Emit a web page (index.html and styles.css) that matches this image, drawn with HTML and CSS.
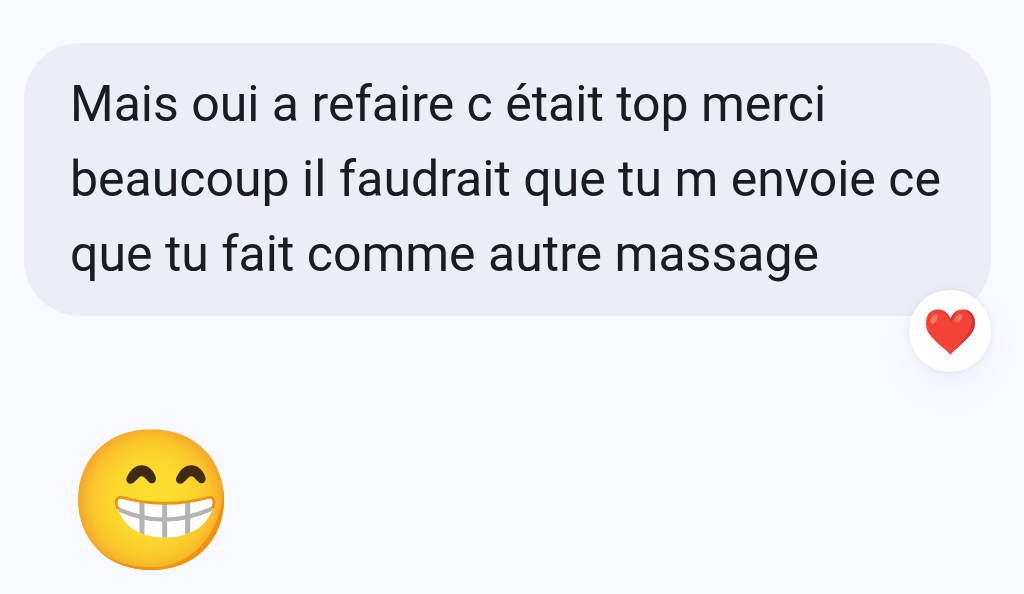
FILE: index.html
```html
<!DOCTYPE html>
<html lang="fr">
<head>
  <meta charset="UTF-8">
  <meta name="viewport" content="width=device-width, initial-scale=1.0">
  <title>Conversation</title>
  <link rel="stylesheet" href="styles.css">
</head>
<body>
  <main class="conversation">
    <div class="bubble">
      <p class="bubble-text">Mais oui a refaire c était top merci beaucoup il faudrait que tu m envoie ce que tu fait comme autre massage</p>
      <div class="reaction">
        <svg class="heart" viewBox="135 117 153 144" role="img" aria-label="Cœur rouge">
          <defs>
            <clipPath id="heartShape">
              <path d="M211 257 C196 240 170 223 153 202 C142 189 137 176 138 160 C139 136 154 121 174 121 C192 121 205 133 212 149 C219 132 231 121 247 121 C271 121 285 138 285 163 C284 198 248 219 211 257Z"/>
            </clipPath>
          </defs>
          <g clip-path="url(#heartShape)">
            <path fill="#f44336" d="M135 117h153v144H135z"/>
            <path fill="#c93832" d="M250 119 C270 132 279 147 275 168 C269 199 238 224 209 258 L225 260 L290 200 L290 117Z"/>
            <path fill="#d83a32" d="M174 121 C194 125 206 138 212 150 C216 137 222 130 230 124 L224 143 L212 160 C207 145 198 130 174 121Z"/>
          </g>
          <ellipse cx="162" cy="150" rx="9" ry="16" transform="rotate(28 162 150)" fill="#fb7563"/>
          <ellipse cx="236" cy="147" rx="8" ry="14" transform="rotate(42 236 147)" fill="#fb7563"/>
        </svg>
      </div>
    </div>

    <div class="big-emoji">
      <svg class="grin" viewBox="50 38 444 429" role="img" aria-label="Visage souriant avec les dents">
        <defs>
          <radialGradient id="faceFill" cx="272" cy="253" r="224" gradientUnits="userSpaceOnUse">
            <stop offset="0" stop-color="#fde030"/>
            <stop offset="0.5" stop-color="#fbd92c"/>
            <stop offset="0.8" stop-color="#fac62a"/>
            <stop offset="1" stop-color="#f5a32a"/>
          </radialGradient>
          <clipPath id="faceShape">
            <path d="M272 42 C410 42 491 138 491 253 C491 371 407 464 272 464 C137 464 53 371 53 253 C53 138 134 42 272 42Z"/>
          </clipPath>
          <clipPath id="mouthShape">
            <path d="M182 248 Q316 278 447 248 Q462 249 458 274 C446 331 386 367 315 367 C244 367 187 335 171 275 Q165 249 182 248Z"/>
          </clipPath>
        </defs>
        <g clip-path="url(#faceShape)">
          <path fill="url(#faceFill)" d="M50 38h444v429H50z"/>
          <path fill="#ee920f" d="M489 210 C488 345 402 456 272 456 C214 456 160 440 120 410 L150 470 L494 467 L494 200Z"/>
        </g>
        <path id="eye" fill="#422b0d" d="M210 205 C199 205 195 193 201 183 C213 158 230 150 244 150 C262 150 280 164 286 185 C290 200 278 208 268 202 L253 187 Q244 179 235 187 L222 200 Q216 206 210 205Z"/>
        <use href="#eye" x="149"/>
        <g clip-path="url(#mouthShape)">
          <path fill="#fff" d="M160 240h305v135H160z"/>
          <path fill="none" stroke="#b3b3b3" stroke-width="15" d="M245 245v125 M313 245v125 M382 245v125"/>
          <path fill="none" stroke="#b3b3b3" stroke-width="13" d="M166 278 Q313 349 463 276"/>
        </g>
        <path fill="none" stroke="#ee9410" stroke-width="9" stroke-linecap="round" d="M171 277 C164 255 170 245 184 246 Q316 282 445 246 C459 245 465 255 458 275"/>
      </svg>
    </div>
  </main>
</body>
</html>
```
FILE: styles.css
```css
* { box-sizing: border-box; }
body { margin: 0; background: #f9faff; color: #1b1b21; font-family: Roboto, "Liberation Sans", sans-serif; }
.conversation { padding: 43px 33px 24px 24px; }
.bubble { position: relative; padding: 24px 32px 24px 46px; background: #ebeef6; border-radius: 56px; }
.bubble-text { margin: 0; font-size: 50px; line-height: 75px; }
.reaction { position: absolute; right: 0; bottom: -56px; display: flex; align-items: center; justify-content: center; width: 82px; height: 82px; padding-top: 2px; background: #fff; border-radius: 50%; box-shadow: 0 16px 32px rgba(100, 120, 230, 0.08), 0 0 6px rgba(60, 60, 90, 0.08); }
.heart { display: block; width: 51px; height: 48px; }
.big-emoji { padding: 112px 53px 0; }
.grin { display: block; width: 148px; height: 143px; }
```
